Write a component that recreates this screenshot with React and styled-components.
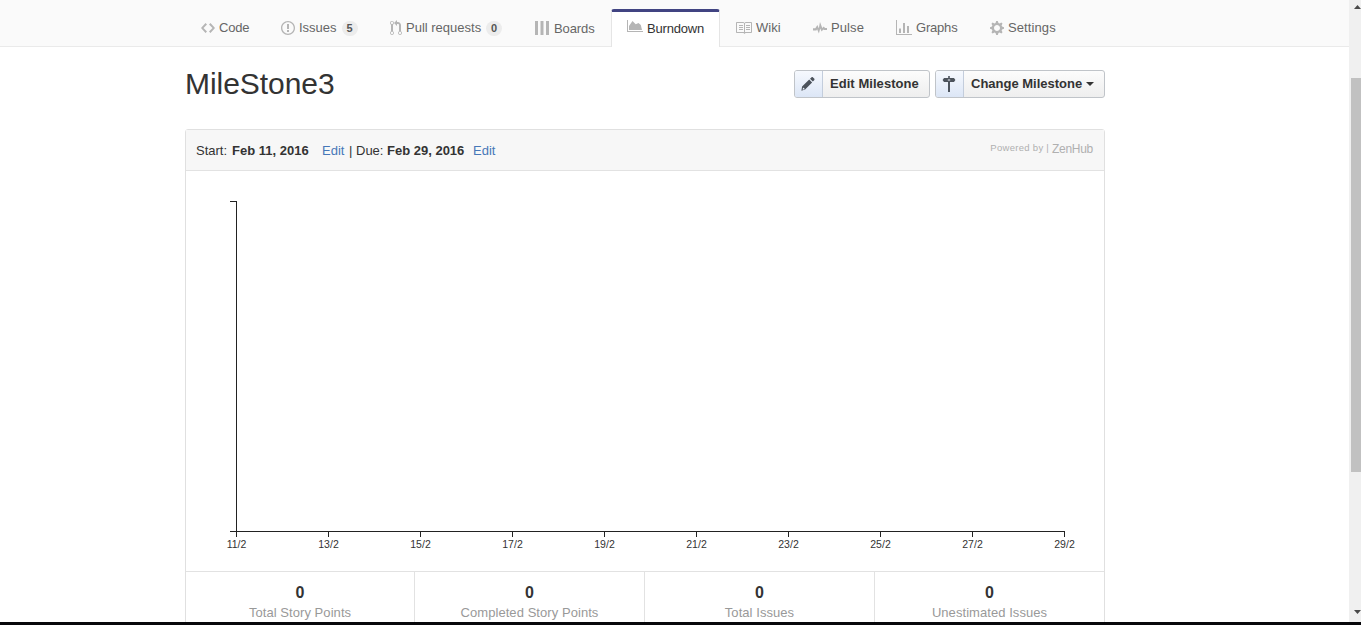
import React from 'react';
import styled, { createGlobalStyle, css } from 'styled-components';

const GlobalStyle = createGlobalStyle`
  * { box-sizing: border-box; }
  html, body { margin: 0; padding: 0; overflow: hidden; background: #fff; }
  body { font-family: "Liberation Sans", Arial, sans-serif; font-size: 13px; color: #333; }
`;

const Screen = styled.div`
  width: 1361px;
  height: 625px;
  display: flex;
  flex-direction: column;
  overflow: hidden;
`;

const Viewport = styled.div`
  height: 622px;
  display: flex;
  overflow: hidden;
`;

const BottomEdge = styled.div`
  height: 3px;
  background: #07070a;
`;

const Page = styled.div`
  width: 1349px;
  flex: none;
  display: flex;
  flex-direction: column;
`;

const NavBar = styled.nav`
  height: 47px;
  flex: none;
  display: flex;
  align-items: flex-end;
  padding-left: 185px;
  background: #fafafa;
  box-shadow: inset 0 -1px #eaeaea;
`;

const Tab = styled.a`
  width: ${(p) => p.$width}px;
  height: 38px;
  flex: none;
  display: flex;
  align-items: flex-start;
  padding: ${(p) => 11 + (p.$drop || 0)}px 0 0 16px;
  color: #666;
  line-height: 15px;
  white-space: nowrap;
  ${(p) =>
    p.$active &&
    css`
      padding: 9px 0 0 15px;
      color: #333;
      background: #fff;
      border: 1px solid #e5e5e5;
      border-top: 3px solid #414482;
      border-bottom: 0;
      border-radius: 3px 3px 0 0;
    `}
`;

const TabIcon = styled.span`
  width: ${(p) => p.$width}px;
  flex: none;
  display: flex;
  svg { display: block; fill: #b5b5b5; flex: none; }
`;

const TabLabel = styled.span`
  letter-spacing: ${(p) => p.$spacing || 0}px;
`;

const Counter = styled.span`
  width: 16px;
  height: 15px;
  margin: 1px 0 0 5px;
  border-radius: 8px;
  background: #ececec;
  color: #555;
  font-size: 11px;
  font-weight: bold;
  line-height: 15px;
  text-align: center;
`;

const Content = styled.main`
  width: 920px;
  margin-left: 185px;
  display: flex;
  flex-direction: column;
`;

const Heading = styled.header`
  height: 82px;
  flex: none;
  display: flex;
  justify-content: space-between;
  align-items: flex-start;
`;

const Title = styled.h1`
  margin: 19px 0 0;
  font-size: 30px;
  font-weight: normal;
  line-height: 36px;
  letter-spacing: -0.05px;
`;

const Actions = styled.div`
  display: flex;
  gap: 5px;
  margin-top: 23px;
`;

const Button = styled.button`
  width: ${(p) => p.$width}px;
  height: 28px;
  display: flex;
  padding: 0;
  overflow: hidden;
  border: 1px solid #c0c4c9;
  border-radius: 3px;
  background: linear-gradient(#fcfcfc, #eee);
  color: #333;
  font: bold 13px/26px "Liberation Sans", Arial, sans-serif;
  white-space: nowrap;
`;

const ButtonIcon = styled.span`
  width: 28px;
  height: 26px;
  flex: none;
  display: flex;
  align-items: center;
  justify-content: center;
  padding-right: 1px;
  border-right: 1px solid #c3cddc;
  background: linear-gradient(#f6f9fe, #dce6f6);
  svg { display: block; fill: #4c535c; }
`;

const ButtonText = styled.span`
  padding-left: 7px;
  letter-spacing: ${(p) => p.$spacing || 0}px;
`;

const Caret = styled.span`
  margin: 11px 0 0 4px;
  height: 0;
  border: 4px solid transparent;
  border-top-color: #333;
  border-bottom: 0;
`;

const Panel = styled.section`
  height: 520px;
  flex: none;
  border: 1px solid #e0e0e0;
  border-radius: 3px;
  display: flex;
  flex-direction: column;
`;

const PanelHeader = styled.div`
  height: 41px;
  flex: none;
  display: flex;
  justify-content: space-between;
  padding: 0 11px 0 10px;
  background: #f7f7f7;
  border-bottom: 1px solid #e2e2e2;
  line-height: 41px;
  white-space: pre;
`;

const DateRange = styled.div`
  display: flex;
`;

const DateValue = styled.b`
  width: ${(p) => p.$width}px;
`;

const DateLabel = styled.span`
  width: ${(p) => p.$width}px;
`;

const EditLink = styled.a`
  width: 27px;
  color: #4777b8;
`;

const Powered = styled.div`
  color: #b0b0b0;
  font-size: 9.5px;
  letter-spacing: 0.3px;
  line-height: 36px;
  display: flex;
`;

const Brand = styled.span`
  font-size: 12px;
  line-height: 38px;
  letter-spacing: -0.3px;
`;

const ChartArea = styled.div`
  height: 400px;
  flex: none;
  svg { display: block; }
`;

const Stats = styled.div`
  height: 80px;
  flex: none;
  display: flex;
  border-top: 1px solid #e2e2e2;
`;

const Stat = styled.div`
  width: 230px;
  flex: none;
  display: flex;
  flex-direction: column;
  align-items: center;
  padding-top: 11px;
  border-right: 1px solid #e2e2e2;
  &:first-child { width: 229px; }
  &:last-child { width: 229px; border-right: 0; }
`;

const StatValue = styled.b`
  font-size: 16px;
  line-height: 20px;
`;

const StatLabel = styled.span`
  color: #999;
  line-height: 19px;
  letter-spacing: 0.06px;
`;

const ScrollTrack = styled.div`
  width: 12px;
  height: 622px;
  flex: none;
  display: flex;
  flex-direction: column;
  align-items: flex-end;
  justify-content: space-between;
  background: #f0f0f0;
  svg { display: block; fill: #4a4a4a; }
`;

const ScrollThumb = styled.div`
  width: 10px;
  height: 394px;
  margin: 69px 0 auto;
  background: #c1c1c1;
`;

const ScrollArrow = styled.svg`
  margin: ${(p) => p.$margin};
`;

const icons = {
  code: [14, 'M9.5 3L8 4.5 11.5 8 8 11.5 9.5 13 14 8 9.5 3zm-5 0L0 8l4.5 5L6 11.5 2.5 8 6 4.5 4.5 3z'],
  issue: [14, 'M7 2.3c3.14 0 5.7 2.56 5.7 5.7s-2.56 5.7-5.7 5.7A5.71 5.71 0 0 1 1.3 8c0-3.14 2.56-5.7 5.7-5.7zM7 1C3.14 1 0 4.14 0 8s3.14 7 7 7 7-3.14 7-7-3.14-7-7-7zm1 3H6v5h2V4zm0 6H6v2h2v-2z'],
  pull: [12, 'M11 11.28V5c-.03-.78-.34-1.47-.94-2.06C9.46 2.35 8.78 2.03 8 2H7V0L4 3l3 3V4h1c.27.02.48.11.69.31.21.2.3.42.31.69v6.28A1.993 1.993 0 0 0 10 15a1.993 1.993 0 0 0 1-3.72zm-1 2.92c-.66 0-1.2-.55-1.2-1.2 0-.65.55-1.2 1.2-1.2.65 0 1.2.55 1.2 1.2 0 .65-.55 1.2-1.2 1.2zM4 3c0-1.11-.89-2-2-2a1.993 1.993 0 0 0-1 3.72v6.56A1.993 1.993 0 0 0 2 15a1.993 1.993 0 0 0 1-3.72V4.72c.59-.34 1-.98 1-1.72zm-.8 10c0 .66-.55 1.2-1.2 1.2-.65 0-1.2-.55-1.2-1.2 0-.65.55-1.2 1.2-1.2.65 0 1.2.55 1.2 1.2zM2 4.2C1.34 4.2.8 3.65.8 3c0-.65.55-1.2 1.2-1.2.65 0 1.2.55 1.2 1.2 0 .65-.55 1.2-1.2 1.2z'],
  boards: [14, 'M0 0h3v14H0zM5.5 0h3v14h-3zM11 0h3v14h-3z'],
  area: [16, 'M0 -1h1v11h15v1H0zM2 9V5l3.5-5 3.2 3.2L11.5 2l2.3 2L15 9z'],
  book: [16, 'M3 5h4v1H3V5zm0 3h4V7H3v1zm0 2h4V9H3v1zm11-5h-4v1h4V5zm0 2h-4v1h4V7zm0 2h-4v1h4V9zm2-6v9c0 .55-.45 1-1 1H9.5l-1 1-1-1H1c-.55 0-1-.45-1-1V3c0-.55.45-1 1-1h6.5l1 1 1-1H15c.55 0 1 .45 1 1zM8 3.5L7.5 3H1v9h7V3.5zm7-.5H9.5l-.5.5V12h6V3z'],
  pulse: [14, 'M0 8.2h2.3L4.4 5l1.4 3.2L7 2l2.3 6 1.5-1.6L12 8h2v2.1h-3l-.7-.6-1.7 2L7.2 8.6 5.9 13.6 4.1 9.2l-.7 1.2H0z'],
  graph: [16, 'M16 14v1H0V0h1v14h15zM5 13H3V8.5h2V13zm4 0H7V3h2v10zm4 0h-2V6h2v7z'],
  gear: [14, 'M14 8.77v-1.6l-1.94-.64-.45-1.09.88-1.84-1.13-1.13-1.81.91-1.09-.45-.69-1.92h-1.6l-.63 1.94-1.11.45-1.84-.88-1.13 1.13.91 1.81-.45 1.09L0 7.23v1.59l1.94.64.45 1.09-.88 1.84 1.13 1.13 1.81-.91 1.09.45.69 1.92h1.59l.63-1.94 1.11-.45 1.84.88 1.13-1.13-.92-1.81.47-1.09L14 8.75v.02zM7 11c-1.66 0-3-1.34-3-3s1.34-3 3-3 3 1.34 3 3-1.34 3-3 3z'],
  pencil: [14, 'M.4 14.8l.7-4.4 7.1-6.9 2.9 2.9-7 7.2zM1.6 13.7l1.9-.5-.3-1.3-1.2-.2zM9 2.7l1.4-1.3c.5-.5 1.1-.5 1.6 0l1.2 1.2c.5.5.5 1.1 0 1.6l-1.4 1.3z'],
  signpost: [14, 'M6.2 0h1.6v2H12l1.4 2L12 6H8v10H6V6H2L.6 4 2 2h4.2zM5.8 3.4v1.2h2.4V3.4z'],
};

function Icon({ name }) {
  const [width, d] = icons[name];
  return (
    <svg width={width} height="16" viewBox={`0 0 ${width} 16`} overflow="visible">
      <path d={d} fillRule="evenodd" />
    </svg>
  );
}

const tabs = [
  { label: 'Code', icon: 'code', width: 80, slot: 18, spacing: -0.2 },
  { label: 'Issues', icon: 'issue', width: 109, slot: 18, spacing: 0, count: 5 },
  { label: 'Pull requests', icon: 'pull', width: 145, slot: 16, spacing: 0, count: 0 },
  { label: 'Boards', icon: 'boards', width: 92, slot: 19, spacing: -0.1, drop: 1 },
  { label: 'Burndown', icon: 'area', width: 109, slot: 20, spacing: -0.2, active: true },
  { label: 'Wiki', icon: 'book', width: 77, slot: 20, spacing: 0 },
  { label: 'Pulse', icon: 'pulse', width: 83, slot: 18, spacing: 0.1 },
  { label: 'Graphs', icon: 'graph', width: 94, slot: 20, spacing: -0.2 },
  { label: 'Settings', icon: 'gear', width: 90, slot: 18, spacing: 0.1 },
];

const ticks = ['11/2', '13/2', '15/2', '17/2', '19/2', '21/2', '23/2', '25/2', '27/2', '29/2'];

const stats = [
  ['0', 'Total Story Points'],
  ['0', 'Completed Story Points'],
  ['0', 'Total Issues'],
  ['0', 'Unestimated Issues'],
];

function BurndownChart() {
  return (
    <svg width="918" height="400" viewBox="0 0 918 400">
      <g fill="none" stroke="#222" shapeRendering="crispEdges">
        <path d="M44 30.5h6.5v330H44" />
        <path d="M50.5 366v-5.5h828v5.5" />
        {ticks.map((t, i) => (
          <path key={t} d={`M${50.5 + i * 92} 360v6`} />
        ))}
      </g>
      <g fill="#333" fontSize="10.5" textAnchor="middle">
        {ticks.map((t, i) => (
          <text key={t} x={50.5 + i * 92} y="377">{t}</text>
        ))}
      </g>
    </svg>
  );
}

export default function App() {
  return (
    <Screen>
      <GlobalStyle />
      <Viewport>
        <Page>
          <NavBar>
            {tabs.map((t) => (
              <Tab key={t.label} $width={t.width} $active={t.active} $drop={t.drop}>
                <TabIcon $width={t.slot}><Icon name={t.icon} /></TabIcon>
                <TabLabel $spacing={t.spacing}>{t.label}</TabLabel>
                {t.count !== undefined && <Counter>{t.count}</Counter>}
              </Tab>
            ))}
          </NavBar>
          <Content>
            <Heading>
              <Title>MileStone3</Title>
              <Actions>
                <Button $width={136}>
                  <ButtonIcon><Icon name="pencil" /></ButtonIcon>
                  <ButtonText $spacing={0.05}>Edit Milestone</ButtonText>
                </Button>
                <Button $width={170}>
                  <ButtonIcon><Icon name="signpost" /></ButtonIcon>
                  <ButtonText>Change Milestone</ButtonText>
                  <Caret />
                </Button>
              </Actions>
            </Heading>
            <Panel>
              <PanelHeader>
                <DateRange>
                  <DateLabel $width={36}>Start:</DateLabel>
                  <DateValue $width={90}>Feb 11, 2016</DateValue>
                  <EditLink>Edit</EditLink>
                  <DateLabel $width={38}>| Due:</DateLabel>
                  <DateValue $width={86}>Feb 29, 2016</DateValue>
                  <EditLink>Edit</EditLink>
                </DateRange>
                <Powered>Powered by | <Brand>ZenHub</Brand></Powered>
              </PanelHeader>
              <ChartArea><BurndownChart /></ChartArea>
              <Stats>
                {stats.map(([value, label]) => (
                  <Stat key={label}>
                    <StatValue>{value}</StatValue>
                    <StatLabel>{label}</StatLabel>
                  </Stat>
                ))}
              </Stats>
            </Panel>
          </Content>
        </Page>
        <ScrollTrack>
          <ScrollArrow $margin="5px 0 0" width="7" height="4" viewBox="0 0 7 4"><path d="M0 4l3.5-4L7 4z" /></ScrollArrow>
          <ScrollThumb />
          <ScrollArrow $margin="0 0 8px" width="7" height="4" viewBox="0 0 7 4"><path d="M0 0l3.5 4L7 0z" /></ScrollArrow>
        </ScrollTrack>
      </Viewport>
      <BottomEdge />
    </Screen>
  );
}
